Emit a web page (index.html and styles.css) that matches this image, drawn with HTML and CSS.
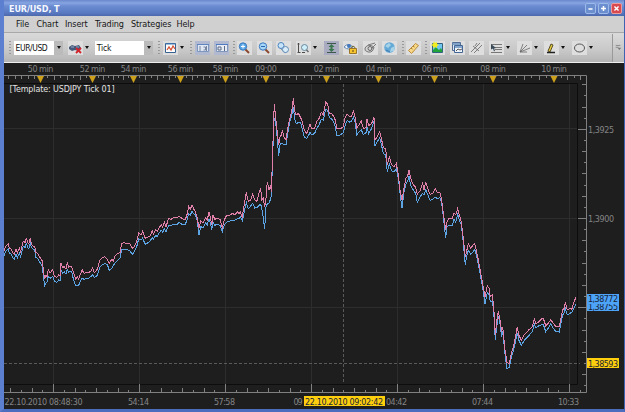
FILE: index.html
```html
<!DOCTYPE html>
<html lang="en">
<head>
  <meta charset="UTF-8" />
  <meta name="viewport" content="width=device-width, initial-scale=1" />
  <title>EUR/USD, T</title>
  <link rel="stylesheet" href="styles.css">
</head>
<body>
  <div class="window">
    <header class="titlebar">
      <h1>EUR/USD, T</h1>
      <div class="controls">
        <svg class="control" viewBox="0 0 11 11"><path d="M3 6h5" /></svg>
        <svg class="control" viewBox="0 0 11 11"><path d="M2.500 5.500h6M5.500 2.500v6" /></svg>
        <svg class="control close" viewBox="0 0 11 11"><path d="M3 3l5 5M8 3l-5 5" /></svg>
      </div>
    </header>

    <nav class="menu">
      <span class="m-file">File</span><span class="m-chart">Chart</span><span class="m-insert">Insert</span><span class="m-trading">Trading</span><span class="m-strategies">Strategies</span><span>Help</span>
    </nav>

    <div class="toolbar">
      <i class="grip first"></i>
      <div class="combo instrument"><span>EUR/USD</span><b></b></div>
      <div class="tool menu-tool">
        <svg viewBox="0 0 15 14"><path d="M1 6l3-2 3 1 4-1 2 3-3 3-3-1-3 1-3-2z" fill="#46597a" /><path d="M3 6h3M8 6h3" stroke="#93a9c8" /><path d="M8 7l5 5M13 7l-5 5" stroke="#d3232b" stroke-width="1.800" /></svg>
      </div>
      <div class="combo period"><span>Tick</span><b></b></div>
      <i class="grip"></i>
      <div class="tool menu-tool">
        <svg viewBox="0 0 15 14"><path d="M2.500 2.500h10v9h-10z" fill="#fff" stroke="#376293" /><path d="M3 3h9" stroke="#437cb7" /><path d="M4 9l2-3 2 3 2-4 2 3" fill="none" stroke="#d65336" stroke-width="1.300" /></svg>
      </div>
      <i class="grip"></i>
      <div class="tool pressed blue table">
        <svg viewBox="0 0 15 14"><path d="M2.500 3.500h11v7h-11z" fill="#dfe7f3" stroke="#7d96c0" /><path d="M2 3.500h12" stroke="#5f84c2" /><path d="M5 5v5M8.500 6h2v3h-2M11.500 5v5" fill="none" stroke="#7484a0" /></svg>
      </div>
      <div class="tool pressed blue">
        <svg viewBox="0 0 15 14"><path d="M2.500 3.500h11v7h-11z" fill="#e6ebf4" stroke="#8196bb" /><path d="M2 3.500h12" stroke="#4f7ac0" /><path d="M4 6h3v3h-3zM10.500 5v5" fill="none" stroke="#596a87" /></svg>
      </div>
      <i class="grip tight"></i>
      <div class="tool">
        <svg viewBox="0 0 15 14"><path d="M8 8l4 4" stroke="#8b482f" stroke-width="2" /><circle cx="6" cy="5.500" r="3.700" fill="#5ba8e8" stroke="#3c78bb" /><path d="M4 5.500h4M6 3.500v4" stroke="#fff" /></svg>
      </div>
      <div class="tool">
        <svg viewBox="0 0 15 14"><path d="M8 8l4 4" stroke="#8b482f" stroke-width="2" /><circle cx="6" cy="5.500" r="3.700" fill="#a7d5f8" stroke="#3c78bb" /><path d="M4 5.500h4" stroke="#286aab" /></svg>
      </div>
      <div class="tool">
        <svg viewBox="0 0 15 14"><path d="M6 4l6 6-3 2-6-6z" fill="#d9e4ee" stroke="#8796a8" /><circle cx="5" cy="4.500" r="3" fill="#c7e4fb" stroke="#4e86bd" /><circle cx="9.500" cy="8.500" r="3" fill="#d8ecfa" stroke="#648eb4" /></svg>
      </div>
      <div class="tool menu-tool">
        <svg viewBox="0 0 15 14"><path d="M2.500 2v10M1.500 3h2M1.500 11.500h3M6 11.500h3" fill="none" stroke="#4c4c4c" /><circle cx="8.500" cy="6.500" r="3" fill="#d1effa" stroke="#658aa0" /><path d="M10.500 9l2 2" stroke="#666" stroke-width="1.500" /></svg>
      </div>
      <div class="tool pressed">
        <svg viewBox="0 0 15 14"><path d="M3 2.500h9M3 11.500h9" stroke="#3c574b" /><path d="M7.500 3l3 3h-2v2h2l-3 3-3-3h2v-2h-2z" fill="#39754d" /></svg>
      </div>
      <div class="tool">
        <svg viewBox="0 0 15 14"><path d="M1 6q4-5 9 0-4 4-9 0" fill="#f2f8fd" stroke="#6688b1" /><circle cx="6" cy="5" r="2" fill="#4378bb" /><path d="M8 8v-1.500q2-3 4 0V8" fill="none" stroke="#6d6030" /><path d="M6.500 7.500h7v5h-7z" fill="#f7c52f" stroke="#9a7728" /><path d="M10 9v2" stroke="#594510" /></svg>
      </div>
      <div class="tool">
        <svg viewBox="0 0 15 14"><path d="M2 7q3-5 9-1-1 6-6 5-4-1-3-4z" fill="#d5d5d5" stroke="#777" /><circle cx="7" cy="7.500" r="2" fill="none" stroke="#666" /><path d="M5 4l7-2M8 8l5-5" stroke="#777" /></svg>
      </div>
      <div class="tool">
        <svg viewBox="0 0 15 14"><circle cx="7.500" cy="6.500" r="5.300" fill="#65a9d6" /><path d="M3 5l4-3 2 2-3 3zM9 7l4-2-1 5-4 1z" fill="#a6d3e8" /><path d="M4 9l4 2" stroke="#3978b5" /></svg>
      </div>
      <i class="grip tight"></i>
      <div class="tool">
        <svg viewBox="0 0 15 14"><path d="M2.500 9.500l7-7 3 2-7 8z" fill="#f7d886" stroke="#bc8b3b" /><path d="M5 7l1.500 1M7 5l1.500 1" stroke="#9a743c" /></svg>
      </div>
      <i class="grip"></i>
      <div class="tool">
        <svg viewBox="0 0 15 14"><path d="M2.500 2.500h10v9h-10z" fill="#70c4ef" stroke="#32627c" /><path d="M3 9l3-3 3 3 2-2 1 2v2H3z" fill="#20a53c" /><path d="M4 0l1 2 2-1v2l2 1-2 1v2L5 6 3 7V5L1 4l2-1z" fill="#f0ec20" /></svg>
      </div>
      <div class="tool">
        <svg viewBox="0 0 15 14"><path d="M2.500 1.500h8v8h-8z" fill="#dce7f3" stroke="#526d91" /><path d="M4.500 4.500h8v7h-8z" fill="#eef4fa" stroke="#426695" /><path d="M5 6h7M2 3h8" stroke="#658cbd" stroke-width="1.500" /><path d="M6 10l2-2 2 1 2-1" fill="none" stroke="#555" /></svg>
      </div>
      <div class="tool">
        <svg viewBox="0 0 15 14"><path d="M2 11L11 2M5 12l8-8M4 5l6 5M8 2l-2 3" fill="none" stroke="#666" stroke-width=".800" /></svg>
      </div>
      <div class="tool menu-tool">
        <svg viewBox="0 0 15 14"><path d="M2 3.500h11M6 6.500h7M6 8.500h7M2 11.500h11" stroke="#777" /><path d="M2 3l5 4-2 .500 1 2-1 1-1-3-2 1z" fill="#394a59" /></svg>
      </div>
      <div class="tool menu-tool">
        <svg viewBox="0 0 15 14"><path d="M3 11L6 3M3 11l7-7M3 11l10-4M3 11h7" fill="none" stroke="#666" stroke-width=".800" /></svg>
      </div>
      <div class="tool menu-tool">
        <svg viewBox="0 0 15 14"><path d="M4 10l3-7 2 1-3 7z" fill="#e9cb39" stroke="#544d26" /><path d="M3 11.500h8" stroke="#222" stroke-width="1.500" /></svg>
      </div>
      <div class="tool menu-tool">
        <svg viewBox="0 0 15 14"><ellipse cx="7.500" cy="7" rx="5" ry="4" fill="none" stroke="#555" /></svg>
      </div>
      <div class="overflow">
        <svg viewBox="0 0 12 28"><path d="M3 12.500h5M3 14.500h3" stroke="#888" /><path d="M5 15h4l-2 2.500z" fill="#777" /></svg>
      </div>
    </div>

    <svg class="chart" viewBox="4 63 620 346">
      <g id="grid"></g>
      <path class="plot-edge" d="M4 83.500H577.500V384.500H4" />
      <path class="cursor" d="M343.500 84V384M4 363.500H580" />
      <polyline id="bid" />
      <polyline id="ask" />
      <path class="axis" d="M4 75.500H586.500V392.500H4" />
      <path class="axis" id="ticks" />
      <g id="markers"></g>
      <text class="template" x="9.500" y="91.500" textLength="105">[Template: USDJPY Tick 01]</text>
      <g class="labels">
        <text x="588" y="132.500" textLength="26">1,3925</text>
        <text x="588" y="221.500" textLength="26">1,3900</text>
        <text x="4.500" y="404.500" textLength="78">22.10.2010 08:48:30</text>
        <text x="128" y="404.500" textLength="21">54:14</text>
        <text x="214" y="404.500" textLength="21">57:58</text>
        <text x="293.500" y="404.500" textLength="9">09</text>
        <text x="386" y="404.500" textLength="21">04:42</text>
        <text x="472" y="404.500" textLength="21">07:44</text>
        <text x="558" y="404.500" textLength="21">10:33</text>
      </g>
      <g class="tags">
        <rect class="price" x="587" y="294" width="32" height="17" />
        <text x="588" y="310" textLength="30">1,38755</text>
        <rect class="price" x="587" y="294" width="32" height="10" />
        <text x="588" y="302.300" textLength="30">1,38772</text>
        <rect class="hover" x="587" y="358" width="32" height="10" />
        <text x="588" y="366.500" textLength="30">1,38593</text>
        <rect class="hover" x="304" y="396" width="81" height="10" />
        <text x="305" y="404.500" textLength="78">22.10.2010 09:02:42</text>
      </g>
    </svg>
  </div>
  <script src="chart.js"></script>
</body>
</html>
```

FILE: styles.css
```css
* {
  box-sizing: border-box;
}
body {
  margin: 0;
  font-family: "DejaVu Sans", Verdana, sans-serif;
  font-size: 8.5px;
  overflow: hidden;
}
.window {
  width: 625px;
  height: 412px;
  display: flex;
  flex-direction: column;
  border-left: 4px solid #5c7fd0;
  border-right: 1px solid #3f63b2;
  border-bottom: 3px solid #4c6dbd;
  background: #1e1e1e;
}
.titlebar {
  height: 16px;
  flex: none;
  display: flex;
  align-items: center;
  justify-content: space-between;
  padding: 1px 2px 0 5px;
  background: linear-gradient(#6a88cc 0, #87a4e2 3px, #6c8cd2 6px, #5878c0 13px, #4c68ad 16px);
}
.titlebar h1 {
  margin: 0;
  color: #f4f7ff;
  font-family: "DejaVu Sans Condensed", "DejaVu Sans", sans-serif;
  font-size: 9px;
  letter-spacing: -0.15px;
}
.controls {
  display: flex;
  gap: 2px;
}
.control {
  width: 11px;
  height: 11px;
  border: 1px solid #9db9ea;
  border-radius: 2px;
  background: #6b8fce;
  fill: none;
  stroke: #fff;
  stroke-width: 1.8;
}
.control.close {
  border-color: #ed9a9a;
  background: #d74a4f;
}

/* Menu */
.menu {
  height: 17px;
  flex: none;
  display: flex;
  align-items: center;
  padding-left: 12px;
  background: #d0d0d0;
  border-bottom: 1px solid #a8a8a8;
  color: #161616;
  font-family: "DejaVu Sans Condensed", "DejaVu Sans", sans-serif;
  font-size: 9px;
  letter-spacing: -0.1px;
  white-space: nowrap;
}
.menu .m-file {
  width: 20.5px;
}
.menu .m-chart {
  width: 28.5px;
}
.menu .m-insert {
  width: 30px;
}
.menu .m-trading {
  width: 36px;
}
.menu .m-strategies {
  width: 45.5px;
}

/* Toolbar */
.toolbar {
  height: 30px;
  flex: none;
  display: flex;
  align-items: center;
  padding-left: 5px;
  background: linear-gradient(#d9d9d9, #c8c8c8 60%, #b4b4b4);
  border-bottom: 1px solid #eee;
}
.grip {
  width: 2px;
  height: 13px;
  margin-right: 2.9px;
  flex: none;
  background: repeating-linear-gradient(#999 0, #999 1px, transparent 1px, transparent 3px);
}
.grip.first {
  margin-right: 3px;
}
.grip.tight {
  margin-right: 1.9px;
}
.combo {
  height: 14px;
  flex: none;
  display: flex;
  align-items: center;
  justify-content: space-between;
  margin-right: 4.6px;
  padding-left: 1.5px;
  background: #fff;
  color: #111;
  font-family: "DejaVu Sans Condensed", "DejaVu Sans", sans-serif;
  font-size: 8.5px;
  letter-spacing: -0.4px;
}
.combo.instrument {
  width: 49px;
}
.combo.period {
  width: 58px;
  letter-spacing: -0.1px;
}
.combo b {
  width: 9px;
  height: 14px;
  display: flex;
  align-items: center;
  justify-content: center;
  background: #bbb;
}
.combo b::after,
.menu-tool::after {
  content: "";
  border: 2.3px solid transparent;
  border-top: 3px solid #111;
  border-bottom: 0;
}
.tool {
  width: 15px;
  height: 14px;
  flex: none;
  display: flex;
  align-items: center;
  margin-right: 4.6px;
}
.tool svg {
  width: 15px;
  height: 14px;
  flex: none;
  background: #dedede;
}
.tool.pressed svg {
  background: #a9acc0;
}
.tool.blue svg {
  background: #b1b9d0;
}
.tool.table {
  margin-right: 3.5px;
}
.tool.menu-tool {
  width: 23px;
  gap: 2px;
}
.overflow {
  width: 12px;
  height: 28px;
  flex: none;
  margin-left: auto;
  border-left: 1px solid #999;
  background: linear-gradient(#dadada, #bbb);
}

/* Chart */
.chart {
  width: 620px;
  height: 346px;
  display: block;
  flex: none;
}
.chart path,
.chart polyline {
  fill: none;
}
.chart .grid-line {
  stroke: #2d2d2d;
}
.plot-edge {
  stroke: #0d0d0d;
}
.cursor {
  stroke: #595959;
  stroke-dasharray: 3 2;
}
.axis {
  stroke: #808080;
}
#bid {
  stroke: #5da4e4;
  shape-rendering: crispEdges;
}
#ask {
  stroke: #e080aa;
  shape-rendering: crispEdges;
}
.chart .marker {
  fill: #cda01c;
}
.chart text {
  font-size: 8px;
}
.template {
  fill: #e4e4e4;
}
.labels text,
.time {
  fill: #858585;
}
.tags .price {
  fill: #4da3f8;
}
.tags .hover {
  fill: #ffcf0e;
}
.tags text {
  fill: #182334;
}
```

FILE: chart.js
```js
const SVG = "http://www.w3.org/2000/svg";

// x, ask, and the spread where it differs from the usual one
const quotes = [
  [4, 251], [5.5, 247], [7, 245], [8.3, 244], [9.3, 248], [11, 249], [12.7, 252.7], [14.3, 254],
  [16, 249.3], [17.3, 253], [19.3, 248.3], [20.7, 251.7], [22.7, 242.7], [24, 240.7], [25, 243.3],
  [26.3, 237.7], [27.7, 242.7], [29, 243.3], [30.3, 238.3], [31.7, 245, 3], [33.3, 246, 3],
  [34.7, 246.7, 3], [36, 252.7], [37.7, 253.3], [39, 256], [40.7, 258.3], [42.3, 261], [43.3, 270, 6],
  [44.7, 279.3, 6], [46, 275, 8], [47, 276.7], [48.3, 269.3, 7], [50, 273.3], [52.7, 269.3, 7],
  [54.3, 276], [56.7, 277.3], [58.7, 275], [60, 276], [61, 263.3, 7], [62.7, 267.3, 6], [64.3, 266.7],
  [66, 269.3], [67.3, 262.3, 7], [68.7, 267.3], [70.7, 266], [72, 268.3], [73.7, 273.3, 7],
  [75.7, 279.3, 6], [77.3, 276.7, 9], [78.7, 279.3, 6], [80, 275, 7], [82.3, 270, 8], [84, 273.3, 6],
  [88.3, 272.3, 6], [90.7, 271.7], [92.7, 267.7, 7], [94.3, 272.7], [97.3, 269.3, 6], [100, 260, 7],
  [102.7, 257.3, 7], [105, 256.7, 7], [107.3, 259.3], [109.3, 263.3, 7], [111.7, 259.3, 9],
  [113.3, 260.7], [115, 256, 7], [117.3, 254, 7], [120, 252.7], [121.7, 243.3, 6], [124, 242.7, 7],
  [126.7, 243.3, 6], [130, 244, 7], [132.3, 248.3, 6], [134.3, 246.7], [136.7, 241.7],
  [138.7, 232.7, 6], [141, 235], [142.7, 231, 7], [145, 238.3, 6], [147.7, 237, 6], [150, 236],
  [152.3, 230.7, 7], [153.3, 234.3], [155.7, 229.3, 6], [157.3, 231.7], [159.3, 227.7],
  [161.3, 224.3, 6], [162.7, 227.3], [164.3, 221.7, 7], [166, 226.7], [168.7, 218.3, 7],
  [171, 219.3, 6], [174, 217.3, 7], [176.7, 218, 7], [179.3, 216.3, 6], [182, 218.3, 6], [185, 220],
  [186.7, 216], [188.7, 206.7, 7], [190.3, 209.3, 6], [192, 205, 6], [193.7, 209], [195.3, 211.7, 3],
  [197.3, 218.3, 3], [199, 228.3, 7], [200.7, 220.7, 6], [203, 222.7], [205.7, 217.3],
  [207.3, 220], [209, 211.7, 7], [210.7, 219.3], [211.7, 225], [213, 215, 7], [214.7, 219.3, 6],
  [217.7, 218.3, 6], [220, 219.3, 6], [222.3, 227.7, 4], [224.3, 220], [226.7, 215, 7],
  [230, 215, 6], [232.7, 213.3, 7], [235, 215], [237.3, 211.7, 7], [239, 213.3], [240.5, 212],
  [242.3, 218, 3], [243.3, 210, 7], [244.7, 201.7, 8], [246.3, 192.3, 10], [248.3, 201.7, 7],
  [250.7, 200, 6], [252.7, 194.3, 9], [254.7, 200, 8], [256.7, 201.7, 6], [259, 193.3, 12],
  [260.7, 188.3, 16], [261.7, 200, 8], [263.3, 198.3, 20], [264.7, 206.7, 22], [266, 198.3, 9],
  [267.3, 181.7, 22], [269, 190, 13], [270.7, 185, 14], [271.3, 191.7, 3], [272, 171.7],
  [272.7, 151.7], [273.7, 118.3, 6], [274.3, 104.3, 14], [275.7, 118.3, 5], [277, 130, 6],
  [278.7, 145, 11], [280, 136.7, 8], [281.7, 135, 8], [282.3, 130, 13], [283.7, 136.7, 8],
  [286, 140], [288.3, 125], [290, 118.3, 3], [291.7, 111.7, 4], [293.3, 98.3, 9], [294.7, 111.7, 7],
  [296.3, 115, 9], [298.3, 113.3, 9], [300.7, 117.7], [302.7, 123.3, 7], [304.3, 130, 7],
  [306.7, 133.3], [308.7, 128.3, 7], [310, 124.3, 8], [312, 129, 6], [314.7, 128.3], [316.7, 121.7, 7],
  [319.3, 118.3, 6], [321.3, 112.3, 7], [323.3, 115], [325.7, 102.3, 7], [327.7, 104.3, 6],
  [329.3, 113.3, 4], [331.7, 113.3, 6], [333.7, 116.7], [335.3, 120, 7], [336.7, 128.3, 7],
  [340, 129, 6], [343.3, 126.7, 6], [345.3, 116.7, 8], [347.3, 114.3, 6], [350, 117.3],
  [351.7, 115.7], [353.3, 111, 6], [355, 116.7, 5], [356.7, 127.7, 7], [359, 125, 7],
  [361.3, 121, 9], [363.3, 128.3, 6], [366, 127.7], [367, 119.3, 8], [368.7, 125.7, 8],
  [371.7, 123.3], [374, 117.3, 4], [375, 140, 6], [377.3, 136.7], [379.7, 131.7, 6],
  [381.7, 140, 6], [383.3, 147.7, 6], [385.7, 149, 6], [387.3, 165, 7], [389.3, 156.7, 7],
  [391.7, 165, 6], [394, 166.7], [396.3, 163.3, 6], [398.3, 175, 3], [400, 190, 3], [402, 200, 8],
  [404, 188.3, 4], [406, 178.3, 6], [407.7, 176], [409, 170, 6], [410.7, 178.3, 7], [413.3, 185],
  [415.7, 187.3, 6], [417.3, 194.3, 8], [420, 190.7, 6], [422.7, 183.3, 10], [424, 190],
  [425.7, 181.7, 8], [427.7, 188.3, 6], [430, 194.3, 6], [432.7, 193.3, 6], [435.3, 189, 8],
  [437.3, 192.7, 6], [440, 192.7], [441.7, 200, 3], [443.3, 213.3, 3], [445.7, 230, 8], [447, 221.7],
  [448.7, 218.3, 7], [452, 219, 7], [454, 213.3, 6], [455.7, 215, 7], [457.7, 208.3, 6],
  [459.3, 215], [461.3, 221.7, 3], [462.7, 233.3, 3], [465.3, 256.7, 8], [466.7, 251], [468.3, 243.3, 7],
  [470.7, 248.3, 6], [473, 245, 7], [474.7, 243.3, 6], [476.7, 252, 4], [479.3, 265, 4],
  [482.3, 281.7, 4], [485, 296.7, 7], [487.3, 285.7, 7], [489, 288.3, 6], [490.3, 296.7],
  [492.3, 295, 6], [493.7, 306.7, 4], [495.3, 335, 5], [496.7, 321.7], [498.3, 310.7], [500, 320, 4],
  [501.7, 331.7], [502.7, 327.3, 4], [505, 350, 4], [507, 362.7, 6], [509.3, 363.3, 4],
  [511.3, 353.3, 4], [514.3, 343.3, 4], [517.3, 326.7, 6], [518.7, 335], [521.3, 340, 5],
  [524, 335, 6], [526, 333.3], [528.7, 330, 6], [530.7, 328.3], [532.3, 327], [534.3, 319, 5],
  [536, 324, 4], [538.7, 321.7, 4], [541.3, 319, 6], [543.3, 318.3, 6], [545.7, 325.7, 6],
  [548.3, 323.3], [550.7, 320, 4], [553.3, 323.3], [555.3, 326], [559.3, 326, 6], [561, 318.3],
  [562.7, 310], [564.3, 308.3, 4], [565.3, 302.3, 6], [567.3, 310, 5], [570, 308.3], [572, 309.3, 3],
  [574, 301.7, 6], [576, 297.3, 7]
];

document.getElementById("ask").setAttribute("points",
  quotes.map(([x, ask]) => `${x},${ask}`).join(" "));
document.getElementById("bid").setAttribute("points",
  quotes.map(([x, ask, spread = 5]) => `${x},${ask + spread}`).join(" "));

function add(parent, name, attrs, text) {
  const el = document.createElementNS(SVG, name);
  for (const key in attrs) el.setAttribute(key, attrs[key]);
  if (text) el.textContent = text;
  document.getElementById(parent).appendChild(el);
}

let ticks = "";

// Grid
for (let x = 53.5; x < 577; x += 86) {
  add("grid", "path", { class: "grid-line", d: `M${x} 84V384` });
}
for (const y of [128.5, 218.5, 307.5]) {
  add("grid", "path", { class: "grid-line", d: `M4 ${y}H577` });
}

// Bottom axis
for (let i = -4; i < 50; i++) {
  const x = Math.round(53 + i * 10.75) + 0.5;
  const size = i % 8 === 0 ? 8 : i % 2 === 0 ? 4 : 2;
  if (x < 584) ticks += `M${x} 392v${-size}`;
}

// Price axis
for (let i = -12; i < 16; i++) {
  const y = Math.round(218 + i * 11.15) + 0.5;
  const size = i % 8 === 0 ? 8 : i % 2 === 0 ? 4 : 2;
  ticks += `M586 ${y}h${-size}`;
}

// Top axis, one marker for every two minutes
const marks = [
  [40.5, "50 min"], [92.5, "52 min"], [133.5, "54 min"], [180.5, "56 min"], [225.5, "58 min"],
  [266, "09:00"], [326.5, "02 min"], [378.5, "04 min"], [434.5, "06 min"], [493, "08 min"],
  [554, "10 min"], [606, ""]
];
for (let x = 34; x > 4; x -= 6.5) ticks += `M${Math.round(x) + 0.5} 76v3`;
marks.forEach(([x, label], i) => {
  if (!label) return;
  const step = (marks[i + 1][0] - x) / 8;
  for (let n = 1; n < 8; n++) {
    const tx = Math.round(x + n * step) + 0.5;
    if (tx < 585) ticks += `M${tx} 76v${n % 2 ? 2 : 4}`;
  }
  add("markers", "path", { class: "marker", d: `M${x - 3.5} 76h7l-3.5 7z` });
  const width = label === "09:00" ? 21.5 : 25.5;
  add("markers", "text", { class: "time", x: x - width / 2, y: 72, textLength: width }, label);
});

document.getElementById("ticks").setAttribute("d", ticks);
```
